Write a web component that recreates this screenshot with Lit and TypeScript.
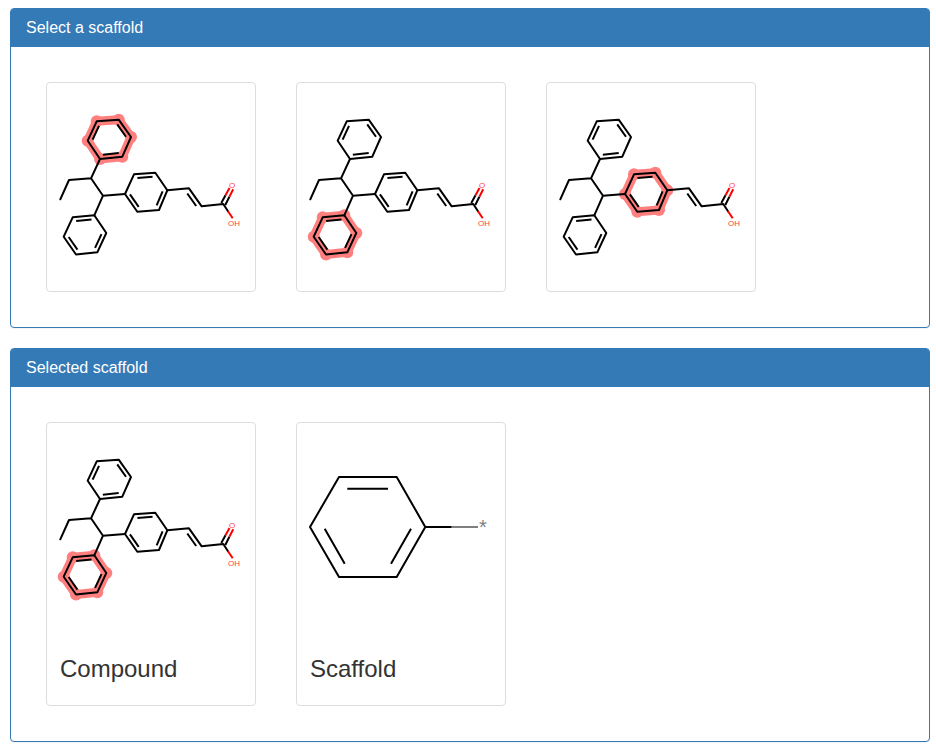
import { LitElement, html, svg, css } from "lit";
import { customElement, property, state } from "lit/decorators.js";

type Point = [number, number];
type Ring = { atoms: Point[]; doubles: number[] };

// Each ring lists its atoms in order; a double bond n joins atom n to atom n + 1.
const RINGS: Ring[] = [
  {
    atoms: [[45.7, 34.3], [67.7, 32.7], [80, 50], [71.3, 69.7], [49, 72], [36.7, 53.7]],
    doubles: [1, 3, 5],
  },
  {
    atoms: [[43.3, 128.3], [55.3, 146], [46.3, 165.3], [25, 167.5], [12.7, 149.7], [21.7, 130.3]],
    doubles: [1, 3, 5],
  },
  {
    atoms: [[74, 107], [83, 87.3], [104.3, 85.7], [116.3, 103.3], [108, 123], [86.3, 124.7]],
    doubles: [1, 3, 5],
  },
];

const pathOf = (points: Point[], close = false) =>
  "M" + points.map((p) => p.join(" ")).join("L") + (close ? "Z" : "");

// The second line of a double bond, shifted towards the centre of its ring.
function innerBond(ring: Ring, n: number): Point[] {
  const a = ring.atoms[n];
  const b = ring.atoms[(n + 1) % 6];
  const cx = ring.atoms.reduce((s, p) => s + p[0], 0) / 6;
  const cy = ring.atoms.reduce((s, p) => s + p[1], 0) / 6;
  const toward = (p: Point): Point => [p[0] + (cx - p[0]) * 0.21, p[1] + (cy - p[1]) * 0.21];
  const [p, q] = [toward(a), toward(b)];
  const trim = 0.05;
  const dx = (q[0] - p[0]) * trim;
  const dy = (q[1] - p[1]) * trim;
  return [[p[0] + dx, p[1] + dy], [q[0] - dx, q[1] - dy]];
}

@customElement("compound-drawing")
export class CompoundDrawing extends LitElement {
  @property({ type: Number }) highlight = 0;

  static styles = css`
    :host { display: block; }
    svg { display: block; width: 100%; height: auto; }
    .bond { fill: none; stroke: #000; stroke-width: 2; stroke-linejoin: round; stroke-linecap: round; }
    .inner { stroke-linecap: butt; }
    .oxygen { stroke: #f00; stroke-linecap: butt; }
    .band { fill: none; stroke: #ff7f7f; stroke-width: 9; }
    .dot { fill: #ff7f7f; }
    .label { fill: #ff4040; font: 8px "Liberation Sans", Arial, sans-serif; }
  `;

  render() {
    const marked = RINGS[this.highlight];
    return html`<svg viewBox="0 0 200 200" role="img" aria-label="Compound structure">
      <path class="band" d=${pathOf(marked.atoms, true)}></path>
      ${marked.atoms.map((p) => svg`<circle class="dot" cx=${p[0]} cy=${p[1]} r="6"></circle>`)}
      ${RINGS.map((r) => svg`
        <path class="bond" d=${pathOf(r.atoms, true)}></path>
        ${r.doubles.map((n) => svg`<path class="bond inner" d=${pathOf(innerBond(r, n))}></path>`)}
      `)}
      <path class="bond" d="M9.3 112.3L18 93L40 91.3L52 108.7L74 107M49 72L40 91.3M52 108.7L43.3 128.3"></path>
      <path class="bond" d="M116.3 103.3L138 101.3L150.7 119.3L172.3 117L177 124.2"></path>
      <path class="bond inner" d="M136.3 106.5L145.2 119M170.3 116L174.5 108.3M174.3 118L178.4 109.7"></path>
      <path class="bond oxygen" d="M174.5 108.3L178.5 101M178.4 109.7L182.2 102.3M177 124.2L181.7 131.3"></path>
      <text class="label" x="178" y="101">O</text>
      <text class="label" x="177" y="139">OH</text>
    </svg>`;
  }
}

@customElement("scaffold-drawing")
export class ScaffoldDrawing extends LitElement {
  static styles = css`
    :host { display: block; }
    svg { display: block; width: 100%; height: auto; }
    .bond { fill: none; stroke: #000; stroke-width: 2; stroke-linejoin: round; }
    .open { stroke: #7f7f7f; }
    .label { fill: #7f7f7f; font: 20px "Liberation Sans", Arial, sans-serif; text-anchor: middle; }
  `;

  render() {
    return html`<svg viewBox="0 0 200 200" role="img" aria-label="Scaffold structure">
      <path class="bond" d="M38 50L95.7 50L124.3 100L95.7 150L38 150L9 100Z"></path>
      <path class="bond" d="M46.3 61.7H87M110 101.7L90 136.7M23.7 101.7L43.7 136.7M124.3 100H150.7"></path>
      <path class="bond open" d="M150.7 100H177"></path>
      <text class="label" x="182" y="107">*</text>
    </svg>`;
  }
}

@customElement("app-panel")
export class AppPanel extends LitElement {
  @property() heading = "";

  static styles = css`
    :host { display: block; }
    .panel { border: 1px solid #337ab7; border-radius: 4px; background: #fff; box-shadow: 0 1px 1px rgba(0, 0, 0, 0.05); }
    .heading { margin: 0; padding: 10px 15px; background: #337ab7; color: #fff; font-size: 16px; line-height: 18px; font-weight: 400; border-radius: 2px 2px 0 0; }
    .body { display: flex; flex-wrap: wrap; align-items: flex-start; gap: 40px; padding: 35px; }
  `;

  render() {
    return html`<section class="panel">
      <h2 class="heading">${this.heading}</h2>
      <div class="body"><slot></slot></div>
    </section>`;
  }
}

@customElement("app-root")
export class AppRoot extends LitElement {
  @state() private selected = 1;

  static styles = css`
    :host { display: block; padding: 8px 6px 4px 10px; background: #fff; color: #333; font-family: "Liberation Sans", Arial, sans-serif; }
    .panels { display: grid; gap: 20px; }
    .card { box-sizing: border-box; width: 210px; margin: 0; padding: 4px; border: 1px solid #ddd; border-radius: 4px; background: #fff; color: inherit; font: inherit; }
    .choice { display: block; cursor: pointer; }
    .choice:hover { border-color: #337ab7; }
    .caption { padding: 29px 9px 19px; font-size: 24px; line-height: 26px; }
  `;

  render() {
    return html`<main class="panels">
      <app-panel heading="Select a scaffold">
        ${[0, 1, 2].map((n) => html`
          <button class="card choice" type="button" aria-label="Scaffold ${n + 1}"
            aria-pressed=${this.selected === n} @click=${() => (this.selected = n)}>
            <compound-drawing .highlight=${n}></compound-drawing>
          </button>`)}
      </app-panel>
      <app-panel heading="Selected scaffold">
        <figure class="card">
          <compound-drawing .highlight=${this.selected}></compound-drawing>
          <figcaption class="caption">Compound</figcaption>
        </figure>
        <figure class="card">
          <scaffold-drawing></scaffold-drawing>
          <figcaption class="caption">Scaffold</figcaption>
        </figure>
      </app-panel>
    </main>`;
  }
}
